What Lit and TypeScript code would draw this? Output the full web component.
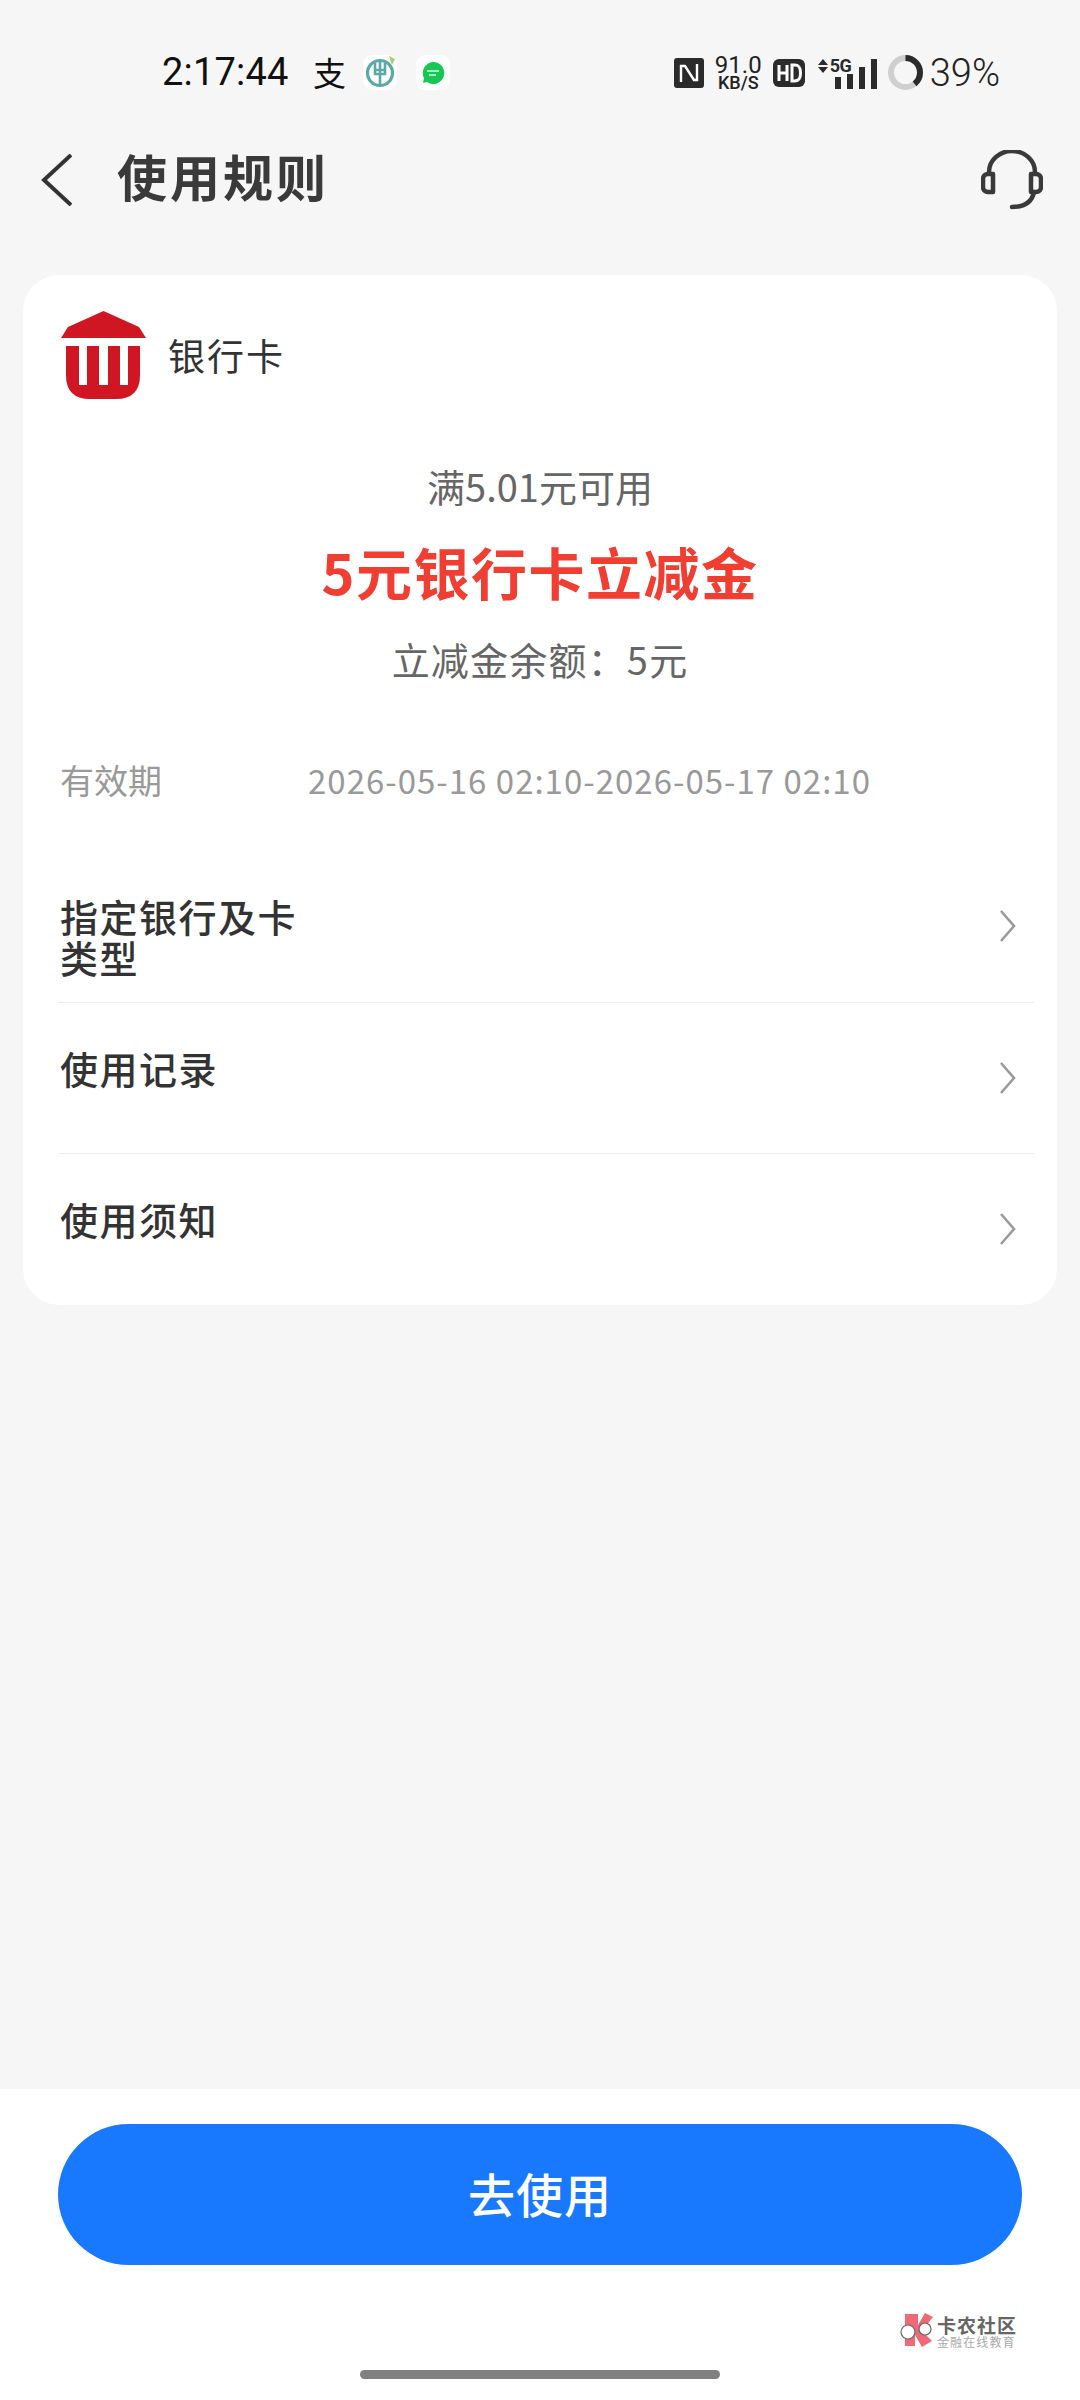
import { LitElement, css, html, svg } from 'lit';
import { customElement } from 'lit/decorators.js';

const rows = [
  { label: '指定银行及卡类型', pad: 'first' },
  { label: '使用记录', pad: '' },
  { label: '使用须知', pad: '' },
];

const chevron = svg`<path d="M3 2 L16 17 L3 32" fill="none" stroke="#9a9a9a" stroke-width="2.6"/>`;

@customElement('app-root')
export class AppRoot extends LitElement {
  static styles = css`
    :host {
      display: block;
      width: 1080px;
      height: 2400px;
      background: #f6f6f6;
      font-family: 'Noto Sans CJK SC', 'Noto Sans', sans-serif;
      color: #333;
      overflow: hidden;
    }
    .page {
      height: 2400px;
      display: flex;
      flex-direction: column;
    }
    svg {
      display: block;
      flex: none;
    }

    /* status bar */
    .status {
      height: 110px;
      flex: none;
      box-sizing: border-box;
      padding: 55px 80px 0 162px;
      display: flex;
      align-items: flex-start;
      justify-content: space-between;
    }
    .status-left,
    .status-right {
      display: flex;
      align-items: center;
      height: 35px;
    }
    .time {
      font: 38px/35px Roboto, sans-serif;
      letter-spacing: 0.2px;
      color: #111;
      width: 151px;
    }
    .zhi {
      font-size: 33px;
      line-height: 35px;
      color: #111;
      width: 50px;
    }
    .app-tile {
      width: 34px;
      height: 35px;
      border-radius: 9px;
      background: #fff;
      margin-right: 19px;
      display: flex;
      align-items: center;
      justify-content: center;
    }
    .speed {
      width: 47px;
      margin: 0 11px;
      text-align: center;
      font-family: Roboto, sans-serif;
      color: #222;
    }
    .speed div:first-child {
      font-size: 24px;
      line-height: 20px;
    }
    .speed div:last-child {
      font-size: 18px;
      line-height: 15px;
      font-weight: 500;
    }
    .net {
      position: relative;
      width: 60px;
      height: 32px;
      margin-left: 13px;
    }
    .net-label {
      position: absolute;
      left: 12px;
      top: 0;
      font: 700 18px/17px Roboto, sans-serif;
      letter-spacing: -0.5px;
      color: #2b2b2b;
    }
    .batt {
      font: 38px/37px Roboto, sans-serif;
      font-weight: 300;
      color: #222;
      margin: 2px 0 0 7px;
    }

    /* title row */
    .nav {
      height: 140px;
      flex: none;
      box-sizing: border-box;
      padding: 0 37px 0 41px;
      display: flex;
      align-items: center;
    }
    .nav h1 {
      margin: 0 0 10px 45px;
      flex: 1;
      font-size: 50px;
      line-height: 60px;
      font-weight: 700;
      letter-spacing: 3px;
      color: #3a3a3a;
    }

    /* rule card */
    .card {
      margin: 25px 23px 0;
      height: 1030px;
      flex: none;
      box-sizing: border-box;
      background: #fff;
      border-radius: 36px;
      padding: 36px 23px 0 35px;
    }
    .brand {
      display: flex;
      align-items: center;
      height: 88px;
      padding-left: 3px;
      font-size: 37px;
      letter-spacing: 2px;
    }
    .brand svg {
      margin-right: 22px;
    }
    .summary {
      margin-top: 62px;
      text-align: center;
      color: #666;
      font-size: 38px;
      padding-right: 12px;
    }
    .summary div {
      line-height: 50px;
    }
    .summary .amount {
      margin-top: 25px;
      font-size: 56px;
      line-height: 70px;
      font-weight: 700;
      color: #f13e33;
      letter-spacing: 1.5px;
    }
    .summary .left {
      margin-top: 28px;
      letter-spacing: 1.2px;
    }
    .validity {
      margin-top: 71px;
      display: flex;
      align-items: center;
      padding-left: 2px;
      color: #999;
      font-size: 34px;
      line-height: 50px;
    }
    .validity .key {
      width: 248px;
    }
    .validity .val {
      font-size: 33px;
      letter-spacing: 1px;
    }
    .rows {
      margin-top: 47px;
    }
    .row {
      height: 151px;
      display: flex;
      justify-content: space-between;
      box-sizing: border-box;
      border-bottom: 1.5px solid #eeeeee;
      padding-left: 2px;
      font-size: 38px;
      line-height: 40px;
      font-weight: 500;
      letter-spacing: 1.5px;
    }
    .row:last-child {
      border-bottom: 0;
    }
    .row .text {
      width: 240px;
      padding-top: 45px;
    }
    .row.first .text {
      padding-top: 43px;
      line-height: 41px;
    }
    .row svg {
      margin: 58px 17px 0 0;
    }
    .row.first svg {
      margin-top: 57px;
    }

    /* bottom action */
    .spacer {
      flex: 1;
    }
    .footer {
      position: relative;
      height: 311px;
      flex: none;
      box-sizing: border-box;
      background: #fff;
      padding: 35px 58px 0;
    }
    .go {
      height: 141px;
      box-sizing: border-box;
      padding-bottom: 4px;
      border-radius: 71px;
      background: #1879ff;
      color: #fff;
      font-size: 47px;
      font-weight: 500;
      letter-spacing: 1px;
      display: flex;
      align-items: center;
      justify-content: center;
    }
    .mark {
      position: absolute;
      left: 900px;
      top: 224px;
      display: flex;
      align-items: center;
      gap: 3px;
    }
    .mark-name {
      font-size: 19px;
      line-height: 21px;
      font-weight: 700;
      color: #666;
      letter-spacing: 1px;
    }
    .mark-sub {
      font-size: 12px;
      line-height: 13px;
      color: #aaa;
      letter-spacing: 1.1px;
    }
    .home {
      position: absolute;
      left: 360px;
      top: 281px;
      width: 360px;
      height: 9px;
      border-radius: 5px;
      background: #808080;
    }
  `;

  render() {
    return html`
      <div class="page">
        <div class="status">
          <div class="status-left">
            <span class="time">2:17:44</span>
            <span class="zhi">支</span>
            <span class="app-tile">
              <svg width="34" height="35" viewBox="0 0 34 35">
                <circle cx="17" cy="18" r="12.500" fill="none" stroke="#5aa9a6" stroke-width="3.200"/>
                <path d="M17 6v24M12 8v11h10V8M13 15h8" fill="none" stroke="#5aa9a6" stroke-width="2.600"/>
                <path d="M26 1l6 3-3 6z" fill="#9fd36a"/>
              </svg>
            </span>
            <span class="app-tile">
              <svg width="26" height="26" viewBox="0 0 26 26">
                <path d="M13 2a11 11 0 1 1-6 20l-4 1 1-5A11 11 0 0 1 13 2z" fill="#17c653"/>
                <path d="M7 11h12M9 15h7" stroke="#d8f7e2" stroke-width="1.6"/>
              </svg>
            </span>
          </div>
          <div class="status-right">
            <svg width="30" height="30" viewBox="0 0 30 30">
              <rect width="30" height="30" rx="3" fill="#2b2b2b"/>
              <path d="M7 24V8h4l9 14M23 6v16h-4" fill="none" stroke="#fff" stroke-width="2.4"/>
            </svg>
            <div class="speed"><div>91.0</div><div>KB/S</div></div>
            <svg width="32" height="28" viewBox="0 0 32 28">
              <rect width="32" height="28" rx="6" fill="#2b2b2b"/>
              <path d="M6 6v16M14 6v16M6 14h8M19 6v16h2.500c5 0 6-3 6-8s-1-8-6-8z" fill="none" stroke="#fff" stroke-width="3"/>
            </svg>
            <div class="net">
              <svg width="60" height="32" viewBox="0 0 60 32">
                <path d="M5 2l5 6H0zM5 16l5-6H0z" fill="#2b2b2b"/>
                <rect x="17" y="20" width="6" height="12" fill="#2b2b2b"/>
                <rect x="29" y="17" width="6" height="15" fill="#2b2b2b"/>
                <rect x="41" y="10" width="6" height="22" fill="#2b2b2b"/>
                <rect x="53" y="2" width="6" height="30" fill="#2b2b2b"/>
              </svg>
              <span class="net-label">5G</span>
            </div>
            <svg style="margin-left:10px" width="35" height="35" viewBox="0 0 35 35">
              <circle cx="17.500" cy="17.500" r="14.500" fill="none" stroke="#cfcfcf" stroke-width="6"/>
              <circle cx="17.500" cy="17.500" r="14.500" fill="none" stroke="#2b2b2b" stroke-width="6" stroke-dasharray="35.500 91.100" transform="rotate(-90 17.500 17.500)"/>
            </svg>
            <span class="batt">39%</span>
          </div>
        </div>

        <div class="nav">
          <svg width="31" height="52" viewBox="0 0 31 52">
            <path d="M30 1 L3 26 L30 51" fill="none" stroke="#333" stroke-width="4"/>
          </svg>
          <h1>使用规则</h1>
          <svg width="62" height="60" viewBox="0 0 62 60">
            <path d="M8 24v-2a23 21 0 0 1 46 0v2" fill="none" stroke="#3a3a3a" stroke-width="4.500"/>
            <path d="M12 24H7a5 5 0 0 0-5 5v8a5 5 0 0 0 5 5h5zM50 24h5a5 5 0 0 1 5 5v8a5 5 0 0 1-5 5h-5z" fill="none" stroke="#3a3a3a" stroke-width="4.500" stroke-linejoin="round"/>
            <path d="M53 42c-2 10-9 15-22 15" fill="none" stroke="#3a3a3a" stroke-width="4.500" stroke-linecap="round"/>
          </svg>
        </div>

        <div class="card">
          <div class="brand">
            <svg width="85" height="88" viewBox="0 0 85 88">
              <path d="M42.500 0 L78 16 L85 27 H0 L7 16z" fill="#d01622"/>
              <path d="M5 35 H79 V64 Q79 88 55 88 H29 Q5 88 5 64z" fill="#d01622"/>
              <rect x="18" y="35" width="8" height="39" fill="#fff"/>
              <rect x="38" y="35" width="9" height="39" fill="#fff"/>
              <rect x="59" y="35" width="8" height="39" fill="#fff"/>
            </svg>
            银行卡
          </div>

          <div class="summary">
            <div>满5.01元可用</div>
            <div class="amount">5元银行卡立减金</div>
            <div class="left">立减金余额：5元</div>
          </div>

          <div class="validity">
            <span class="key">有效期</span>
            <span class="val">2026-05-16 02:10-2026-05-17 02:10</span>
          </div>

          <div class="rows">
            ${rows.map(
              (r) => html`
                <div class="row ${r.pad}">
                  <div class="text">${r.label}</div>
                  <svg width="19" height="34" viewBox="0 0 19 34">${chevron}</svg>
                </div>
              `
            )}
          </div>
        </div>

        <div class="spacer"></div>

        <div class="footer">
          <div class="go">去使用</div>
          <div class="mark">
            <svg width="34" height="35" viewBox="0 0 34 35">
              <path d="M5 1h13v11l7-12 8 4-11 14 10 10-10 6-7-12v11H5z" fill="#ee6a76"/>
              <circle cx="8" cy="19" r="7" fill="#fff" stroke="#666" stroke-width="1.200"/>
              <circle cx="25" cy="16" r="6" fill="#fff" stroke="#666" stroke-width="1.200"/>
            </svg>
            <div>
              <div class="mark-name">卡农社区</div>
              <div class="mark-sub">金融在线教育</div>
            </div>
          </div>
          <div class="home"></div>
        </div>
      </div>
    `;
  }
}
